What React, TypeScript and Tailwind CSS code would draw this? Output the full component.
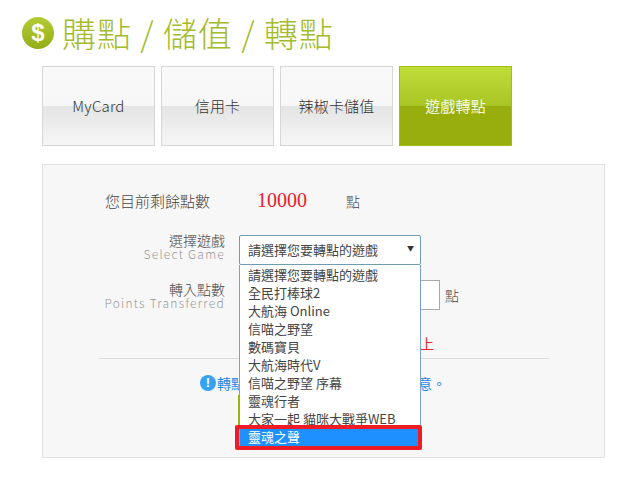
const games = [
  '請選擇您要轉點的遊戲',
  '全民打棒球2',
  '大航海 Online',
  '信喵之野望',
  '數碼寶貝',
  '大航海時代V',
  '信喵之野望 序幕',
  '靈魂行者',
  '大家一起 貓咪大戰爭WEB',
  '靈魂之聲',
];

const tabs = ['MyCard', '信用卡', '辣椒卡儲值', '遊戲轉點'];

function Tab({ label, active }: { label: string; active: boolean }) {
  return (
    <div
      className={`flex h-[80px] w-[113px] items-center justify-center border text-[15px] tracking-[0.2px] ${
        active
          ? 'border-[#a4be10] bg-[linear-gradient(to_bottom,#bfdc38_0%,#a8c524_50%,#98ae0c_50%,#98ae0c_100%)] font-normal text-[#f4f8e0]'
          : 'border-[#d6d6d6] bg-[linear-gradient(to_bottom,#f9f9f9_0%,#f7f7f7_50%,#e4e4e4_50%,#f6f6f6_100%)] font-light text-[#333]'
      }`}
    >
      {label}
    </div>
  );
}

function FieldLabel({ zh, en, className }: { zh: string; en: string; className: string }) {
  return (
    <div className={`flex w-[182px] flex-col items-end ${className}`}>
      <span className="text-[14px] font-light leading-[14px] text-[#444]">{zh}</span>
      <span className="text-[12px] font-light leading-[14px] tracking-[1.25px] text-[#999]">{en}</span>
    </div>
  );
}

export default function App() {
  return (
    <div className="relative h-[477px] w-[641px] overflow-hidden bg-white font-['Noto_Sans_CJK_TC','Noto_Sans',sans-serif]">
      <div className="flex items-center pl-[22px] pt-[13px]">
        <div className="flex h-[32px] w-[32px] items-center justify-center rounded-full bg-[linear-gradient(to_bottom,#b3cb33,#95ad18)] font-['Liberation_Sans',sans-serif] text-[24px] font-bold text-white">
          $
        </div>
        <h1 className="ml-[8px] text-[34px] font-light leading-[40px] tracking-[0.9px] text-[#a3bb2c]">
          購點 / 儲值 / 轉點
        </h1>
      </div>

      <div className="ml-[42px] mt-[13px] flex gap-[6px]">
        {tabs.map((t, i) => (
          <Tab key={t} label={t} active={i === 3} />
        ))}
      </div>

      <div className="ml-[42px] mt-[18px] flex h-[294px] w-[563px] flex-col border border-[#e2e2e2] bg-[#f7f7f7] pt-[21px]">
        <div className="flex h-[30px] items-center">
          <span className="ml-[62px] w-[152px] text-[15px] font-light text-[#444]">您目前剩餘點數</span>
          <span className="mb-[2px] w-[89px] font-['Liberation_Serif',serif] text-[20px] text-[#f0182c]">10000</span>
          <span className="text-[14px] font-light text-[#444]">點</span>
        </div>

        <div className="mt-[19px] flex h-[30px] items-center">
          <FieldLabel zh="選擇遊戲" en="Select Game" className="mb-[7px]" />
          <div className="ml-[14px] flex h-[30px] w-[182px] items-center justify-between rounded-[2px] border border-[#6f9cb0] bg-white pl-[8px] pr-[6px] text-[13px] text-[#444]">
            <span>請選擇您要轉點的遊戲</span>
            <span className="mb-[3px] text-[7px] text-[#333]">▼</span>
          </div>
        </div>

        <div className="mt-[15px] flex h-[30px] items-center">
          <FieldLabel zh="轉入點數" en="Points Transferred" className="mt-[1px]" />
          <div className="ml-[14px] h-[30px] w-[201px] border border-[#a9a9a9] bg-white" />
          <span className="ml-[5px] text-[14px] font-light text-[#444]">點</span>
        </div>

        <div className="ml-[377px] mt-[24px] h-[18px] text-[14px] leading-[18px] text-[#e8232a]">上</div>

        <div className="ml-[56px] mt-[6px] h-px w-[450px] bg-[#d9d9d9]" />

        {/* the middle of this line is covered by the open list */}
        <div className="ml-[157px] mt-[14px] flex h-[20px] w-[246px] items-center text-[14px] text-[#1e88e5]">
          <div className="flex h-[16px] w-[16px] items-center justify-center rounded-full bg-[#36a3f2] font-['Liberation_Sans',sans-serif] text-[13px] font-bold text-white">
            !
          </div>
          <span className="ml-[1px] whitespace-nowrap">轉點</span>
          <span className="ml-auto whitespace-nowrap">意。</span>
        </div>

        <div className="ml-[194px] mt-[2px] h-[30px] w-[174px] border-l border-white bg-[#98ae0c]" />
      </div>

      {/* open select list */}
      <div className="absolute left-[239px] top-[265px] w-[182px] border-x border-b border-[#7b9fd8] bg-white text-[13px] leading-[18px] text-[#444]">
        <div className="pt-[1px]">
          {games.map((g, i) => (
            <div key={g} className={`h-[18px] pl-[8px] ${i === 9 ? 'bg-[#1e90ff] text-white' : ''}`}>
              {g}
            </div>
          ))}
        </div>
      </div>

      {/* red highlight */}
      <div className="absolute left-[235px] top-[425px] h-[25px] w-[187px] rounded-[2px] border-[4px] border-[#ee1c25]" />
    </div>
  );
}
